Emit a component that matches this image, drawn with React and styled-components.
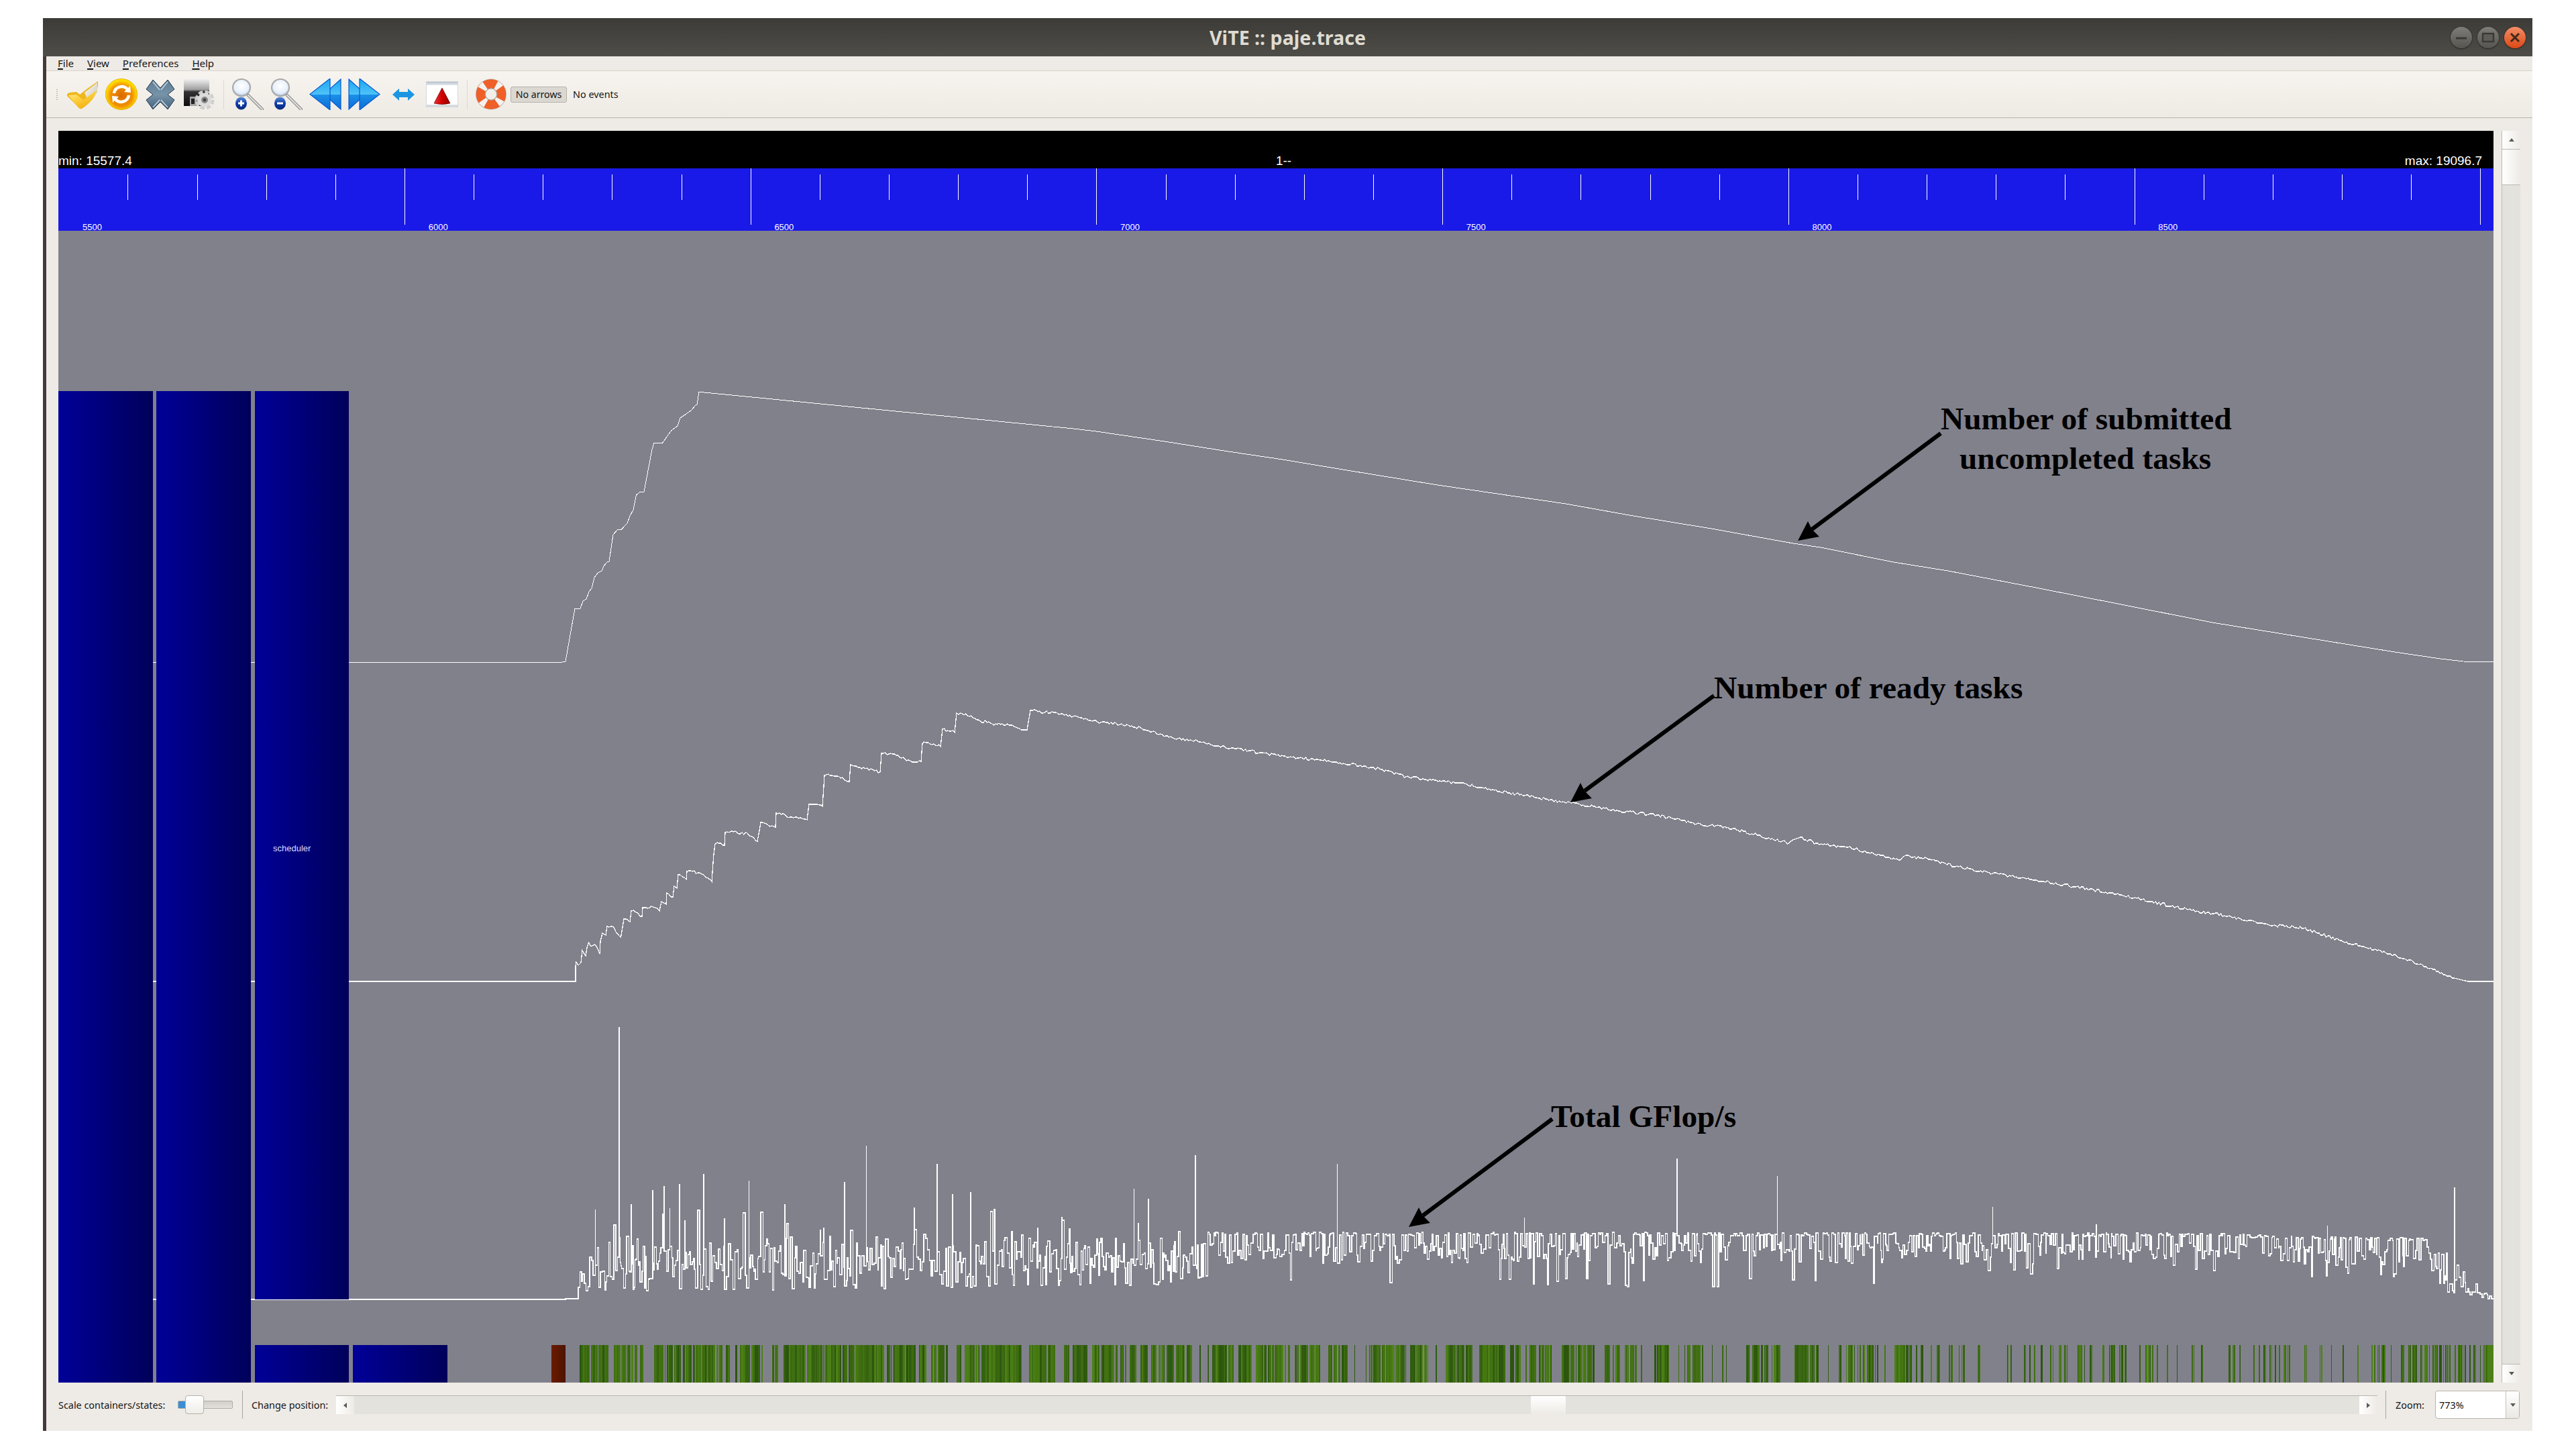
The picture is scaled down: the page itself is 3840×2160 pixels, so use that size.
import React, { useMemo } from "react";
import styled, { createGlobalStyle } from "styled-components";

const Global = createGlobalStyle`
  html, body { margin: 0; padding: 0; background: #fff; }
  #root { width: 3840px; height: 2160px; }
`;

const UI_FONT = `"Noto Sans", "Open Sans", sans-serif`;
const GL_FONT = `"Liberation Sans", Arial, sans-serif`;
const ANNOTATION_FONT = `"Liberation Serif", "Times New Roman", serif`;

const Page = styled.div`
  padding: 27px 0 0 64px;
  box-sizing: border-box;
  width: 3840px;
  height: 2160px;
`;
const Window = styled.div`
  width: 3711px;
  height: 2106px;
  display: flex;
  flex-direction: column;
  font-family: ${UI_FONT};
  color: #151515;
`;
const TitleBar = styled.header`
  height: 57px;
  flex: none;
  display: grid;
  grid-template-columns: 1fr auto 1fr;
  align-items: center;
  background: linear-gradient(#3c3b37, #4e4d48);
`;
const Title = styled.div`
  grid-column: 2;
  font-size: 28.6px;
  font-weight: 700;
  color: #dfdbd2;
`;
const WindowButtons = styled.div`
  grid-column: 3;
  justify-self: end;
  display: flex;
  gap: 8px;
  padding-right: 10px;
`;
const WindowButton = styled.div`
  width: 32px;
  height: 32px;
  border-radius: 50%;
  display: flex;
  align-items: center;
  justify-content: center;
  box-shadow: 0 1px 2px #2a2926, 0 0 0 1px #3a3935;
  background: ${(p) => (p.$close ? "linear-gradient(#f28d68, #dd4814)" : "linear-gradient(#7f7d77, #55544e)")};
`;
const Content = styled.div`
  flex: 1;
  min-height: 0;
  display: flex;
  flex-direction: column;
  background: #eeebe6;
  border-left: 5px solid #443a3b;
`;
const MenuBar = styled.nav`
  height: 21px;
  flex: none;
  display: flex;
  align-items: center;
  gap: 20px;
  padding-left: 17px;
  font-size: 15px;
  border-bottom: 1px solid #d5d1cb;
`;
const MenuItem = styled.span`
  line-height: 21px;
  &::first-letter { text-decoration: underline; text-decoration-thickness: 2px; text-underline-offset: 2px; }
`;
const Toolbar = styled.div`
  height: 69px;
  flex: none;
  box-sizing: content-box;
  display: flex;
  align-items: center;
  background: linear-gradient(#f7f4ef, #eeebe5);
  border-bottom: 1px solid #b9b5ae;
`;
const Grip = styled.div`
  width: 2px;
  height: 17px;
  margin: 0 8px 0 15px;
  background-image: radial-gradient(#b0aca5 40%, transparent 50%);
  background-size: 2px 3px;
`;
const ToolSlot = styled.div`
  width: 58px;
  height: 48px;
  flex: none;
  display: flex;
  align-items: center;
  justify-content: center;
`;
const ToolSeparator = styled.div`
  width: 1px;
  height: 44px;
  flex: none;
  margin: 0 6px 0 ${(p) => p.$left || 7}px;
  background: #dcd8d2;
`;
const ToggleButton = styled.div`
  width: 84px;
  height: 24px;
  box-sizing: border-box;
  flex: none;
  display: flex;
  align-items: center;
  justify-content: center;
  font-size: 14.2px;
  background: #dbd7d1;
  border: 1px solid #b5b1ab;
  border-radius: 3px;
`;
const ToolText = styled.span`
  font-size: 14.4px;
  margin-left: 9px;
`;
const Body = styled.div`
  flex: 1;
  min-height: 0;
  display: flex;
  padding: 19px 18px 0 18px;
  gap: 12px;
`;
const Canvas = styled.main`
  width: 3630px;
  flex: none;
  display: flex;
  flex-direction: column;
  background: #81818c;
`;
const InfoBar = styled.div`
  height: 56px;
  flex: none;
  display: grid;
  grid-template-columns: 1fr auto 1fr;
  align-items: end;
  background: #000;
  color: #fff;
  font: 19px/22px ${GL_FONT};
  padding-right: 17px;
`;
const CenterInfo = styled.span`
  margin-left: 40px;
`;
const MaxInfo = styled.span`
  justify-self: end;
`;
const Ruler = styled.svg`
  display: block;
  flex: none;
  width: 3630px;
  height: 93px;
  overflow: visible;
  background: #1919e8;
`;
const RulerLabel = styled.text`
  font: 13px ${GL_FONT};
  fill: #fff;
`;
const Trace = styled.svg`
  display: block;
  flex: none;
  width: 3630px;
  height: 1717px;
`;
const BlockLabel = styled.text`
  font: 13px ${GL_FONT};
  fill: #dcdcff;
`;
const Annotation = styled.text`
  font: 700 47.4px ${ANNOTATION_FONT};
  fill: #000;
`;
const VScroll = styled.aside`
  width: 27px;
  flex: none;
  height: 1866px;
  display: flex;
  flex-direction: column;
  background: #e3e2dd;
  border-left: 1px solid #bdb9b3;
  box-sizing: content-box;
`;
const ScrollEnd = styled.div`
  flex: none;
  display: flex;
  align-items: center;
  justify-content: center;
  background: linear-gradient(90deg, #fff, #eeebe6);
  width: ${(p) => (p.$horizontal ? "27px" : "auto")};
  height: ${(p) => (p.$horizontal ? "auto" : "27px")};
  border-bottom: ${(p) => (p.$top ? "1px solid #bdb9b3" : "none")};
  border-top: ${(p) => (p.$bottom ? "1px solid #bdb9b3" : "none")};
`;
const Arrow = styled.i`
  display: block;
  width: 0;
  height: 0;
  border: 4px solid transparent;
  ${(p) => p.$dir === "up" && "border-top: 0; border-bottom: 5px solid #5a5a58;"}
  ${(p) => p.$dir === "down" && "border-bottom: 0; border-top: 5px solid #5a5a58;"}
  ${(p) => p.$dir === "left" && "border-left: 0; border-right: 5px solid #5a5a58;"}
  ${(p) => p.$dir === "right" && "border-right: 0; border-left: 5px solid #5a5a58;"}
`;
const VThumb = styled.div`
  height: 52px;
  flex: none;
  background: linear-gradient(90deg, #fff, #eeebe6);
  border-bottom: 1px solid #bdb9b3;
`;
const VTrack = styled.div`
  flex: 1;
`;
const StatusBar = styled.footer`
  height: 72px;
  flex: none;
  display: flex;
  align-items: center;
  padding: 0 19px 6px 18px;
  box-sizing: border-box;
  font-size: 14.4px;
`;
const StatusLabel = styled.span`
  flex: none;
  white-space: nowrap;
  box-sizing: border-box;
  width: ${(p) => p.$width}px;
  padding-left: ${(p) => p.$pad || 0}px;
`;
const SliderGroove = styled.div`
  position: relative;
  flex: none;
  width: 82px;
  height: 12px;
  margin: 0 14px 0 17px;
  border: 1px solid #b0aca6;
  box-sizing: border-box;
  background: linear-gradient(#d2cfca, #e3e1dc);
  border-radius: 2px;
`;
const SliderFill = styled.div`
  width: 12px;
  height: 100%;
  background: #3d8ed2;
`;
const SliderHandle = styled.div`
  position: absolute;
  left: 10px;
  top: -9px;
  width: 28px;
  height: 28px;
  box-sizing: border-box;
  background: linear-gradient(#fff, #efede8);
  border: 1px solid #b5b1ab;
  border-radius: 4px;
`;
const StatusSeparator = styled.div`
  flex: none;
  width: 1px;
  height: 42px;
  margin-left: ${(p) => p.$left || 0}px;
  background: #a9a5a0;
`;
const HScroll = styled.div`
  flex: none;
  width: 3043px;
  height: 28px;
  display: flex;
  align-items: stretch;
  background: #e3e2dd;
  border-top: 1px solid #b8b4ae;
  box-sizing: border-box;
`;
const HTrack = styled.div`
  flex: 1;
  padding-left: 1754px;
`;
const HThumb = styled.div`
  width: 52px;
  height: 100%;
  background: linear-gradient(#fff, #eeebe6);
`;
const Combo = styled.div`
  flex: none;
  width: 126px;
  height: 42px;
  box-sizing: border-box;
  display: flex;
  background: #fff;
  border: 1px solid #b8b4ae;
  border-radius: 4px;
  overflow: hidden;
`;
const ComboValue = styled.div`
  flex: 1;
  display: flex;
  align-items: center;
  padding-left: 5px;
`;
const ComboDrop = styled.div`
  width: 19px;
  display: flex;
  align-items: center;
  justify-content: center;
  border-left: 1px solid #c6c2bc;
  background: linear-gradient(#fff, #ebe8e3);
`;

/* ----- data ----- */
const mulberry = (seed) => () => {
  seed |= 0; seed = (seed + 0x6d2b79f5) | 0;
  let t = Math.imul(seed ^ (seed >>> 15), 1 | seed);
  t = (t + Math.imul(t ^ (t >>> 7), 61 | t)) ^ t;
  return ((t ^ (t >>> 14)) >>> 0) / 4294967296;
};
const interp = (tbl, x) => {
  for (let i = 1; i < tbl.length; i++) {
    if (x <= tbl[i][0]) {
      const [a, b] = tbl[i - 1];
      const [c, d] = tbl[i];
      return b + ((d - b) * (x - a)) / (c - a);
    }
  }
  return tbl[tbl.length - 1][1];
};

const SUBMITTED = [[87,987],[838,987],[843,986],[857,907],[865,907],[869,896],[874,893],[878,882],[882,877],[886,861],[891,854],[897,851],[900.5,843],[905,838],[908,837],[914,797],[921,789],[926.5,789],[935,780],[939,769],[944,760],[948.5,738],[953,734],[960,733],[972,670],[975,660],[987,661],[1000.5,642],[1010,635],[1014,623],[1020,619],[1030,612],[1037,604],[1039,603],[1042,584],[1050,585],[1600,639],[1634,643],[1736,658],[1831,673],[1912,685],[2008,701],[2143,723],[2225,735],[2334,751],[2429,768],[2551,788],[2673,810],[2714,816],[2823,838],[2904,851],[3040,877],[3162,901],[3298,928],[3434,950],[3570,972],[3638,982],[3672,986],[3717,987]];

const READY = [[87,1463],[858,1463],[858,1440],[859,1434],[862,1439],[866,1435],[868,1417],[873,1425],[875,1413],[877.5,1405],[881,1411],[887,1408],[894,1422],[895,1403],[898,1391],[903,1394],[905,1381],[913,1381],[925.5,1397],[930,1370],[934,1370],[939,1374],[941,1358],[948,1360],[957,1366],[958,1353],[976,1353],[983,1358],[986,1344],[993,1348],[994,1331],[1003,1337],[1005,1321],[1009,1324],[1011,1304],[1023,1311],[1024,1299],[1043,1301],[1050,1305],[1061,1314],[1064,1273],[1066,1258],[1069,1256],[1080,1260],[1081,1241],[1091,1239],[1101,1243],[1114,1242],[1121,1247],[1129,1254],[1132,1238],[1134,1226],[1156,1233],[1157,1212],[1167,1213],[1175,1219],[1188,1218],[1203,1222],[1206,1199],[1216,1199],[1226,1202],[1229,1156],[1246,1157],[1266,1165],[1268,1140],[1290,1146],[1312,1151],[1314,1123],[1336,1126],[1354,1133],[1365,1136],[1373,1135],[1375,1108],[1392,1109],[1402,1113],[1405,1087],[1423,1092],[1426,1063],[1448,1067],[1456,1073],[1479,1079],[1501.5,1079],[1514,1084],[1531,1088],[1536,1059],[1545,1059],[1555,1063],[1568,1061],[1600,1068],[1641,1077],[1682,1081],[1722,1091],[1735,1098],[1777,1104],[1817,1112],[1838,1115],[1885,1123],[1926,1129],[1980,1134],[2048,1144],[2096,1158],[2171,1167],[2225,1177],[2293,1190],[2340,1196],[2415,1209],[2470,1215],[2537,1230],[2571,1232],[2619,1245],[2667,1257],[2684,1248],[2707,1257],[2755,1263],[2830,1282],[2839,1276],[2877,1281],[2925,1294],[3013,1309],[3095,1322],[3162,1334],[3244,1352],[3326,1367],[3380,1378],[3434,1384],[3488,1402],[3556,1420],[3611,1438],[3658,1458],[3679,1463],[3717,1463]];

const SPIKES = [[885,1803],[921,1531],[940,1795],[972,1774],[989,1768],[998,1801],[1012,1765],[1019,1819],[1049,1750],[1080,1816],[1114,1760],[1168,1795],[1222,1833],[1259,1762],[1291,1708],[1362,1800],[1396,1735],[1420,1780],[1447,1777],[1547,1830],[1582,1814],[1690,1772],[1712,1787],[1782,1722],[1992,1735],[2272,1815],[2498,1727],[2649,1753],[2970,1799],[3124,1825],[3469,1827],[3659,1770]];

const G_TOP = [[864,1880],[900,1838],[1100,1836],[1400,1838],[1700,1838],[1800,1837],[3300,1838],[3400,1842],[3620,1845],[3660,1875],[3700,1925],[3717,1936]];
const G_BOT = [[864,1925],[920,1925],[1700,1918],[1800,1905],[2850,1905],[3000,1890],[3300,1885],[3620,1895],[3650,1928],[3717,1937]];

const GREEN = [[864,907,.8],[915,950,.75],[953,959,.7],[975,1077,.75],[1082,1088,.9],[1095,1137,.8],[1151,1160,.7],[1168,1318,.92],[1322,1366,.88],[1370,1382,.85],[1388,1414,.8],[1426,1433,.8],[1438,1523,.88],[1531,1573,.85],[1586,1594,.7],[1599,1621,.85],[1628,1680,.85],[1684,1696,.7],[1700,1711,.7],[1716,1736,.85],[1739,1777,.85],[1783,1790,.5],[1800,1803,.5],[1807,1841,.8],[1846,1866,.92],[1872,1923,.85],[1930,1968,.8],[1978,2011,.75],[2017,2021,.3],[2036,2096,.8],[2102,2129,.75],[2140,2142,.8],[2155,2195,.92],[2205,2245,.9],[2251,2267,.9],[2274,2313,.7],[2328,2378,.75],[2390,2440,.65],[2446,2448,.8],[2464,2489,.92],[2502,2503,.8],[2511,2539,.65],[2552,2553,.8],[2563,2590,.55],[2603,2654,.75],[2673,2711,.85],[2725,2727,.8],[2739,2780,.6],[2780,2800,.8],[2809,2811,.8],[2824,2850,.92],[2853,2896,.5],[2905,2911,.8],[2918,2930,.6],[2944,2964,.55],[2981,3001,.45],[3007,3045,.45],[3056,3082,.4],[3093,3119,.5],[3134,3137,.8],[3144,3170,.6],[3189,3251,.35],[3264,3292,.4],[3322,3340,.5],[3354,3419,.35],[3433,3439,.7],[3447,3521,.35],[3533,3600,.5],[3600,3708,.6],[3708,3717,1]];

const GREENS = ["#467812", "#427212", "#3c6a10", "#356210", "#2c560e", "#4c8016", "#407012", "#2f5c10"];

const ARROWS = [
  [2893, 646, 2680, 806],
  [2555, 1037, 2341, 1196],
  [2314, 1668, 2100, 1829],
];

const linePath = (pts) => "M" + pts.map((p) => p.join(" ")).join("L");

const jitterPath = (pts) => {
  const r = mulberry(77);
  const out = [pts[0]];
  for (let i = 1; i < pts.length; i++) {
    const [a, b] = pts[i - 1];
    const [c, d] = pts[i];
    if (c - a > 5 && a > 860 && c < 3679) {
      const n = Math.floor((c - a) / 2.5);
      for (let k = 1; k < n; k++) {
        out.push([a + ((c - a) * k) / n, Math.round(b + ((d - b) * k) / n + (r() - 0.5) * 4)]);
      }
    }
    out.push(pts[i]);
  }
  return linePath(out);
};

const gflopPath = () => {
  const r = mulberry(4242);
  let d = "M87 1937H843V1936H862V1919";
  let x = 862;
  let si = 0;
  while (x < 3712) {
    x += 1 + r() * 2.6;
    const t = interp(G_TOP, x);
    const b = Math.max(t, interp(G_BOT, x));
    let y;
    if (x < 1800) {
      const w = 0.5 + 0.5 * Math.sin(x / 43) * Math.sin(x / 17);
      y = t + Math.pow(r(), 0.75) * (b - t) * (0.7 + 0.3 * w);
      if (r() < 0.1) y = b - r() * 6;
      if (x > 890 && r() < 0.05) y = t - r() * 35;
    } else if (x > 3620) {
      y = t + r() * (b - t);
    } else {
      const q = r();
      if (q < 0.42) y = t + r() * 5;
      else if (q < 0.72) y = t + 14 + r() * 14;
      else if (q < 0.96) y = t + 26 + r() * 20;
      else y = b + r() * 14;
    }
    y = Math.round(Math.min(y, 1937));
    x = Math.round(x * 2) / 2;
    d += `H${x}`;
    while (si < SPIKES.length && SPIKES[si][0] <= x) {
      d += `V${SPIKES[si][1]}`;
      si++;
    }
    d += `V${y}`;
  }
  d += "H3717V1937";
  return d;
};

const greenBars = () => {
  const r = mulberry(99);
  const bars = [];
  GREEN.forEach(([a, b, dens]) => {
    let x = a;
    while (x < b) {
      if (r() < dens) {
        const w = dens >= 1 ? b - x : 1 + Math.floor(r() * (dens > 0.7 ? 3 : 2));
        bars.push([x, Math.min(w, b - x), GREENS[Math.floor(r() * GREENS.length)]]);
        x += w;
      } else {
        x += 1 + Math.floor(r() * (dens < 0.6 ? 5 : 2));
      }
    }
  });
  return bars;
};

/* ----- icons ----- */
const IconOpen = () => (
  <svg width="48" height="44" viewBox="0 0 48 44">
    <defs>
      <linearGradient id="fo1" x1="0" y1="0" x2="0.6" y2="1"><stop offset="0" stopColor="#ffec9a" /><stop offset="0.5" stopColor="#fcd040" /><stop offset="1" stopColor="#f3ae0a" /></linearGradient>
      <linearGradient id="fo2" x1="0" y1="0" x2="1" y2="1"><stop offset="0" stopColor="#fff" /><stop offset="1" stopColor="#c9c2ae" /></linearGradient>
    </defs>
    <path d="M1 24Q0 20 5 19L15 18L20 22L30 14L47 2L47 10L42 24Q36 34 23 42Q20 44 18 41Z" fill="#eeb71c" />
    <path d="M27 19L46 4L46 19L32 31Z" fill="url(#fo2)" />
    <path d="M3 23L15 22L25 30L46 15L41 26Q34 36 23 43Q20 44 18 41Q10 33 3 23Z" fill="url(#fo1)" />
  </svg>
);
const IconReload = () => (
  <svg width="48" height="47" viewBox="0 0 48 47">
    <defs>
      <radialGradient id="re1" cx="0.5" cy="0.55" r="0.55"><stop offset="0" stopColor="#d96a00" /><stop offset="0.62" stopColor="#f09000" /><stop offset="0.86" stopColor="#ffd000" /><stop offset="1" stopColor="#fff000" /></radialGradient>
    </defs>
    <ellipse cx="24" cy="23.5" rx="23.5" ry="23" fill="url(#re1)" stroke="#e0b400" />
    <path d="M13 22A11.5 11.5 0 0 1 33 16" fill="none" stroke="#fff" strokeWidth="4.5" />
    <path d="M28 20L38 21L37 11Z" fill="#fff" />
    <path d="M35 25A11.5 11.5 0 0 1 15 31" fill="none" stroke="#fff" strokeWidth="4.5" />
    <path d="M20 27L10 26L11 36Z" fill="#fff" />
  </svg>
);
const IconClose = () => (
  <svg width="44" height="46" viewBox="0 0 44 46">
    <defs>
      <linearGradient id="xx1" x1="0" y1="0" x2="0" y2="1"><stop offset="0" stopColor="#5c7d96" /><stop offset="0.5" stopColor="#7793a8" /><stop offset="1" stopColor="#43647e" /></linearGradient>
    </defs>
    <path d="M11 1L22 13L33 1L43 15L33 23L43 31L33 45L22 34L11 45L1 31L11 23L1 15Z" fill="url(#xx1)" stroke="#27384a" strokeWidth="1" />
    <path d="M11 4L21 16M33 4L23 16M11 42L21 31M33 42L23 31" stroke="#c4d2dc" strokeWidth="1.6" />
  </svg>
);
const IconSave = () => (
  <svg width="46" height="47" viewBox="0 0 46 47">
    <defs>
      <linearGradient id="sv1" x1="0" y1="0" x2="0" y2="1"><stop offset="0" stopColor="#f4f4f4" /><stop offset="0.4" stopColor="#a0a0a0" /><stop offset="0.48" stopColor="#333" /><stop offset="1" stopColor="#0e0e0e" /></linearGradient>
    </defs>
    <rect x="0" y="0" width="38" height="41" fill="url(#sv1)" />
    <rect x="9" y="27" width="14" height="14" fill="#a4a4a4" />
    <rect x="11" y="30" width="5" height="8" fill="#222" />
    <circle cx="31" cy="32" r="11.5" fill="none" stroke="#cfcfcf" strokeWidth="6" strokeDasharray="6 3.05" />
    <circle cx="31" cy="32" r="10.5" fill="#dcdcdc" />
    <circle cx="31" cy="32" r="5" fill="#8a8a8a" />
    <circle cx="31" cy="32" r="2.4" fill="#444" />
  </svg>
);
const IconZoom = ({ id, minus }) => (
  <svg width="47" height="47" viewBox="0 0 47 47">
    <defs>
      <radialGradient id={`zl${id}`} cx="0.5" cy="0.4" r="0.6"><stop offset="0" stopColor="#fff" /><stop offset="0.72" stopColor="#e6effa" /><stop offset="1" stopColor="#a8c8ec" /></radialGradient>
      <linearGradient id={`zb${id}`} x1="0" y1="0" x2="0" y2="1"><stop offset="0" stopColor="#5f8fd8" /><stop offset="0.5" stopColor="#0b3aa8" /><stop offset="1" stopColor="#072a7c" /></linearGradient>
    </defs>
    <path d="M24 25L45 46" stroke="#8a8a8a" strokeWidth="4.5" strokeLinecap="round" />
    <path d="M24 25L45 46" stroke="#e4e4e4" strokeWidth="2" strokeLinecap="round" />
    <ellipse cx="14" cy="13.5" rx="13" ry="12.5" fill={`url(#zl${id})`} stroke="#a9a9a9" strokeWidth="2.2" />
    <ellipse cx="13.5" cy="37" rx="8.5" ry="9.5" fill={`url(#zb${id})`} />
    <path d={minus ? "M9 37H18" : "M9 37H18M13.5 32.5V41.5"} stroke="#fff" strokeWidth="3" />
  </svg>
);
const IconSkip = ({ id, flip }) => (
  <svg width="48" height="47" viewBox="0 0 48 47">
    <defs>
      <linearGradient id={`sk${id}`} x1="0" y1="0" x2="0" y2="1"><stop offset="0" stopColor="#19a6f2" /><stop offset="0.5" stopColor="#4fc2f7" /><stop offset="0.52" stopColor="#1a90e6" /><stop offset="1" stopColor="#0c6bd8" /></linearGradient>
    </defs>
    <g transform={flip ? "translate(48 0) scale(-1 1)" : undefined}>
      <path d="M47 1L47 46L22 23.5Z" fill={`url(#sk${id})`} stroke="#0a58d0" strokeWidth="1.2" />
      <path d="M31 0L31 47L1 23.5Z" fill={`url(#sk${id})`} stroke="#0a58d0" strokeWidth="1.2" />
    </g>
  </svg>
);
const IconFit = () => (
  <svg width="33" height="18" viewBox="0 0 33 18">
    <path d="M0 9L10 0V5H23V0L33 9L23 18V13H10V18Z" fill="#1c96e2" />
  </svg>
);
const IconRedTriangle = () => (
  <svg width="48" height="39" viewBox="0 0 48 39">
    <defs>
      <linearGradient id="tr1" x1="0" y1="0" x2="1" y2="0"><stop offset="0" stopColor="#f03030" /><stop offset="0.5" stopColor="#d00000" /><stop offset="1" stopColor="#8e0505" /></linearGradient>
      <linearGradient id="tr2" x1="0" y1="0" x2="0" y2="1"><stop offset="0" stopColor="#b9c2cc" /><stop offset="1" stopColor="#e4e8ec" /></linearGradient>
    </defs>
    <rect x="0.5" y="0.5" width="47" height="38" fill="#fff" stroke="#d4d8dc" />
    <rect x="1" y="1" width="46" height="5" fill="url(#tr2)" />
    <rect x="1" y="35" width="46" height="3" fill="#d6dbe0" />
    <path d="M24 10L36 33Q24 36 12 33Z" fill="url(#tr1)" stroke="#5a0000" strokeWidth="0.6" />
  </svg>
);
const IconHelp = () => (
  <svg width="46" height="47" viewBox="0 0 46 47">
    <circle cx="23" cy="23.5" r="15.5" fill="none" stroke="#b9b4ae" strokeWidth="15" />
    <circle cx="23" cy="23.5" r="15.5" fill="none" stroke="#ef5f28" strokeWidth="13.5" />
    <circle cx="23" cy="23.5" r="15.5" fill="none" stroke="#f4f2ef" strokeWidth="13.5" strokeDasharray="7 17.35" transform="rotate(-62 23 23.5)" />
    <circle cx="23" cy="23.5" r="8.8" fill="none" stroke="#a9a49e" strokeWidth="1" />
  </svg>
);

/* ----- app ----- */
export default function App() {
  const data = useMemo(
    () => ({ ready: jitterPath(READY), gflop: gflopPath(), bars: greenBars() }),
    []
  );
  const ticks = [];
  for (let i = 1; i <= 35; i++) {
    const x = Math.round(87.3 + 103.14 * i);
    const major = i % 5 === 0;
    ticks.push(<rect key={i} x={x} y={major ? 251 : 260} width="1" height={major ? 84 : 38} fill="#fff" shapeRendering="crispEdges" />);
  }
  const labels = [5500, 6000, 6500, 7000, 7500, 8000, 8500];

  return (
    <Page>
      <Global />
      <Window>
        <TitleBar>
          <Title>ViTE :: paje.trace</Title>
          <WindowButtons>
            <WindowButton>
              <svg width="20" height="20" viewBox="0 0 20 20"><path d="M2 11H18" stroke="#3a3935" strokeWidth="3" /></svg>
            </WindowButton>
            <WindowButton>
              <svg width="20" height="20" viewBox="0 0 20 20"><rect x="2" y="4" width="16" height="12" fill="#5e5d57" stroke="#3a3935" strokeWidth="2.4" /></svg>
            </WindowButton>
            <WindowButton $close>
              <svg width="20" height="20" viewBox="0 0 20 20"><path d="M4 4L16 16M16 4L4 16" stroke="#3e2a18" strokeWidth="3" /></svg>
            </WindowButton>
          </WindowButtons>
        </TitleBar>
        <Content>
          <MenuBar>
            <MenuItem>File</MenuItem>
            <MenuItem>View</MenuItem>
            <MenuItem>Preferences</MenuItem>
            <MenuItem>Help</MenuItem>
          </MenuBar>
          <Toolbar>
            <Grip />
            <ToolSlot><IconOpen /></ToolSlot>
            <ToolSlot><IconReload /></ToolSlot>
            <ToolSlot><IconClose /></ToolSlot>
            <ToolSlot><IconSave /></ToolSlot>
            <ToolSeparator />
            <ToolSlot><IconZoom id="a" /></ToolSlot>
            <ToolSlot><IconZoom id="b" minus /></ToolSlot>
            <ToolSlot><IconSkip id="l" /></ToolSlot>
            <ToolSlot><IconSkip id="r" flip /></ToolSlot>
            <ToolSlot><IconFit /></ToolSlot>
            <ToolSlot><IconRedTriangle /></ToolSlot>
            <ToolSeparator $left={8} />
            <ToolSlot><IconHelp /></ToolSlot>
            <ToggleButton>No arrows</ToggleButton>
            <ToolText>No events</ToolText>
          </Toolbar>
          <Body>
            <Canvas>
              <InfoBar>
                <span>min: 15577.4</span>
                <CenterInfo>1--</CenterInfo>
                <MaxInfo>max: 19096.7</MaxInfo>
              </InfoBar>
              <Ruler viewBox="87 251 3630 93">
                {ticks}
                {labels.map((l, i) => (
                  <RulerLabel key={l} x={123 + 515.7 * i} y="343">{l}</RulerLabel>
                ))}
              </Ruler>
              <Trace viewBox="87 344 3630 1717">
                <defs>
                  <linearGradient id="block" x1="0" y1="0" x2="1" y2="0">
                    <stop offset="0" stopColor="#000098" />
                    <stop offset="1" stopColor="#00005a" />
                  </linearGradient>
                  <linearGradient id="redState" x1="0" y1="0" x2="1" y2="0">
                    <stop offset="0" stopColor="#6b1b00" />
                    <stop offset="1" stopColor="#4e1300" />
                  </linearGradient>
                </defs>
                <g fill="none" stroke="#fff" shapeRendering="crispEdges">
                  <path d={linePath(SUBMITTED)} strokeWidth="1" />
                  <path d={data.ready} strokeWidth="1.3" />
                  <path d={data.gflop} strokeWidth="1.4" />
                </g>
                <g shapeRendering="crispEdges">
                  {data.bars.map(([x, w, c], i) => (
                    <rect key={i} x={x} y="2005" width={w} height="56" fill={c} />
                  ))}
                  <rect x="87" y="583" width="141" height="1478" fill="url(#block)" />
                  <rect x="233" y="583" width="141" height="1478" fill="url(#block)" />
                  <rect x="380" y="583" width="140" height="1354" fill="url(#block)" />
                  <rect x="380" y="2005" width="140" height="56" fill="url(#block)" />
                  <rect x="526" y="2005" width="141" height="56" fill="url(#block)" />
                  <rect x="822" y="2005" width="21" height="56" fill="url(#redState)" />
                </g>
                <BlockLabel x="407" y="1269">scheduler</BlockLabel>
                <Annotation x="2893" y="640">Number of submitted</Annotation>
                <Annotation x="2921" y="699">uncompleted tasks</Annotation>
                <Annotation x="2555" y="1041">Number of ready tasks</Annotation>
                <Annotation x="2312" y="1680">Total GFlop/s</Annotation>
                {ARROWS.map(([x1, y1, x2, y2]) => (
                  <g key={x1}>
                    <path d={`M${x1} ${y1}L${x2 + 21} ${y2 - 17}`} stroke="#000" strokeWidth="6" />
                    <path d={`M${x2} ${y2}L${x2 + 15} ${y2 - 29}L${x2 + 21} ${y2 - 17}L${x2 + 32} ${y2 - 6}Z`} fill="#000" />
                  </g>
                ))}
              </Trace>
            </Canvas>
            <VScroll>
              <ScrollEnd $top><Arrow $dir="up" /></ScrollEnd>
              <VThumb />
              <VTrack />
              <ScrollEnd $bottom><Arrow $dir="down" /></ScrollEnd>
            </VScroll>
          </Body>
          <StatusBar>
            <StatusLabel $width={161}>Scale containers/states:</StatusLabel>
            <SliderGroove>
              <SliderFill />
              <SliderHandle />
            </SliderGroove>
            <StatusSeparator />
            <StatusLabel $width={139} $pad={13}>Change position:</StatusLabel>
            <HScroll>
              <ScrollEnd $horizontal><Arrow $dir="left" /></ScrollEnd>
              <HTrack><HThumb /></HTrack>
              <ScrollEnd $horizontal><Arrow $dir="right" /></ScrollEnd>
            </HScroll>
            <StatusSeparator $left={12} />
            <StatusLabel $width={73} $pad={14}>Zoom:</StatusLabel>
            <Combo>
              <ComboValue>773%</ComboValue>
              <ComboDrop><Arrow $dir="down" /></ComboDrop>
            </Combo>
          </StatusBar>
        </Content>
      </Window>
    </Page>
  );
}
